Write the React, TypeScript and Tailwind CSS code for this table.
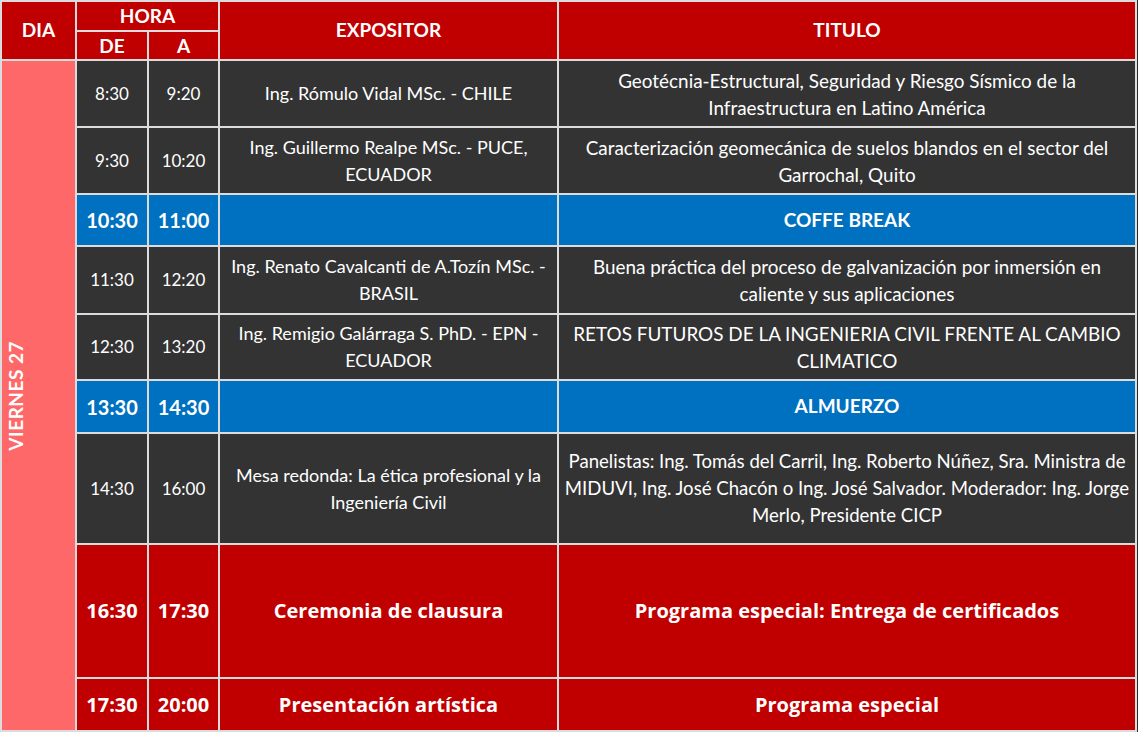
import React from 'react';

type Row = {
  de: string;
  a: string;
  expositor: string;
  titulo: string;
  kind: 'talk' | 'break' | 'closing';
  h: string;
  tight?: boolean;
};

const ROWS: Row[] = [
  { de: '8:30', a: '9:20', expositor: 'Ing. Rómulo Vidal MSc. - CHILE', titulo: 'Geotécnia-Estructural, Seguridad y Riesgo Sísmico de la Infraestructura en Latino América', kind: 'talk', h: 'h-[67px]' },
  { de: '9:30', a: '10:20', expositor: 'Ing. Guillermo Realpe MSc. - PUCE, ECUADOR', titulo: 'Caracterización geomecánica de suelos blandos en el sector del Garrochal, Quito', kind: 'talk', h: 'h-[67px]' },
  { de: '10:30', a: '11:00', expositor: '', titulo: 'COFFE BREAK', kind: 'break', h: 'h-[52px]' },
  { de: '11:30', a: '12:20', expositor: 'Ing. Renato Cavalcanti de A.Tozín MSc. - BRASIL', titulo: 'Buena práctica del proceso de galvanización por inmersión en caliente y sus aplicaciones', kind: 'talk', h: 'h-[68px]' },
  { de: '12:30', a: '13:20', expositor: 'Ing. Remigio Galárraga S. PhD. - EPN - ECUADOR', titulo: 'RETOS FUTUROS DE LA INGENIERIA CIVIL FRENTE AL CAMBIO CLIMATICO', kind: 'talk', h: 'h-[66px]' },
  { de: '13:30', a: '14:30', expositor: '', titulo: 'ALMUERZO', kind: 'break', h: 'h-[53px]' },
  { de: '14:30', a: '16:00', expositor: 'Mesa redonda: La ética profesional y la Ingeniería Civil', titulo: 'Panelistas: Ing. Tomás del Carril, Ing. Roberto Núñez, Sra. Ministra de MIDUVI, Ing. José Chacón o Ing. José Salvador. Moderador: Ing. Jorge Merlo, Presidente CICP', kind: 'talk', h: 'h-[111px]', tight: true },
  { de: '16:30', a: '17:30', expositor: 'Ceremonia de clausura', titulo: 'Programa especial: Entrega de certificados', kind: 'closing', h: 'h-[134px]' },
  { de: '17:30', a: '20:00', expositor: 'Presentación artística', titulo: 'Programa especial', kind: 'closing', h: 'h-[53px]' },
];

const cell = 'border-2 border-[#dcdcdc] text-center align-middle text-white';

export default function App() {
  return (
    <div className="w-[1138px] h-[732px] bg-[#2b2b2b] overflow-hidden font-['Lato','Liberation_Sans',sans-serif]">
      <table className="table-fixed border-collapse w-[1137px]">
        <colgroup>
          <col className="w-[75px]" />
          <col className="w-[72px]" />
          <col className="w-[71px]" />
          <col className="w-[339px]" />
          <col />
        </colgroup>
        <thead>
          <tr className="h-[30px] bg-[#c00000]">
            <th rowSpan={2} className={`${cell} text-[19px] font-bold`}>DIA</th>
            <th colSpan={2} className={`${cell} text-[19px] font-bold leading-[22px]`}>HORA</th>
            <th rowSpan={2} className={`${cell} text-[19px] font-bold`}>EXPOSITOR</th>
            <th rowSpan={2} className={`${cell} text-[19px] font-bold`}>TITULO</th>
          </tr>
          <tr className="h-[29px] bg-[#c00000]">
            <th className={`${cell} text-[19px] font-bold leading-[22px]`}>DE</th>
            <th className={`${cell} text-[19px] font-bold leading-[22px]`}>A</th>
          </tr>
        </thead>
        <tbody>
          {ROWS.map((r, i) => {
            const bg =
              r.kind === 'talk' ? 'bg-[#333333]' : r.kind === 'break' ? 'bg-[#0070c0]' : 'bg-[#c00000]';
            const time =
              r.kind === 'talk'
                ? 'text-[17px]'
                : r.kind === 'break'
                ? 'text-[20px] font-bold'
                : "text-[20px] font-bold font-['Open_Sans',sans-serif]";
            const expo =
              r.kind === 'talk'
                ? 'text-[18px] leading-[27px] px-[3px]'
                : r.kind === 'break'
                ? 'text-[19px] font-bold'
                : "text-[20px] font-bold font-['Open_Sans',sans-serif]";
            const title =
              r.kind === 'talk'
                ? r.tight
                  ? 'text-[18.6px] leading-[27px] px-[2px]'
                  : 'text-[18.9px] leading-[27px] px-[2px]'
                : r.kind === 'break'
                ? 'text-[19px] font-bold'
                : "text-[20px] font-bold font-['Open_Sans',sans-serif]";
            return (
              <tr key={i} className={`${r.h} ${bg}`}>
                {i === 0 && (
                  <td rowSpan={ROWS.length} className={`${cell} bg-[#ff6868]`}>
                    <div className="mx-auto [writing-mode:vertical-rl] rotate-180 text-[19px] font-bold tracking-[0.5px]">
                      VIERNES 27
                    </div>
                  </td>
                )}
                <td className={`${cell} ${time}`}>{r.de}</td>
                <td className={`${cell} ${time}`}>{r.a}</td>
                <td className={`${cell} ${expo}`}>{r.expositor}</td>
                <td className={`${cell} ${title}`}>{r.titulo}</td>
              </tr>
            );
          })}
        </tbody>
      </table>
    </div>
  );
}
